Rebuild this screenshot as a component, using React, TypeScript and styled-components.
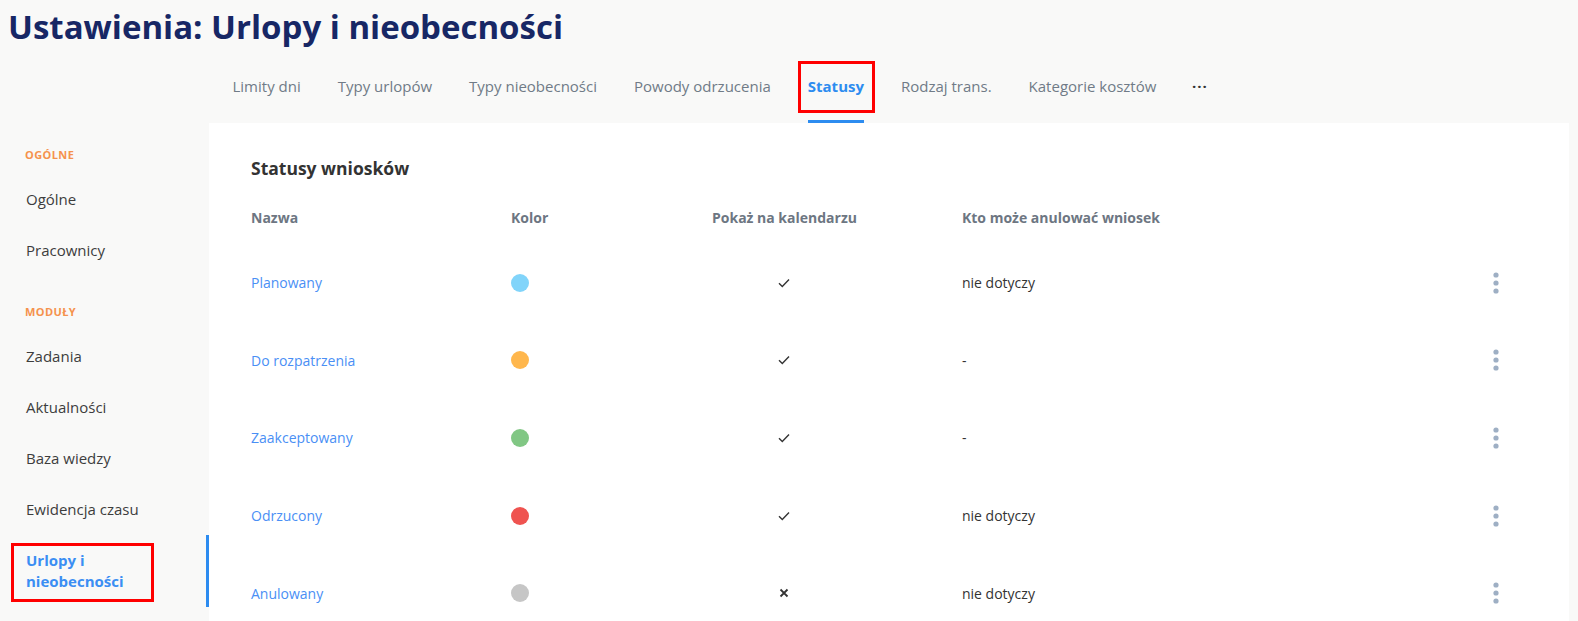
import React from 'react';
import styled, { createGlobalStyle, css } from 'styled-components';

const GlobalStyle = createGlobalStyle`
  html, body {
    margin: 0;
    padding: 0;
    background: #f9f9f8;
    font-family: "Open Sans", "Noto Sans", sans-serif;
    overflow: hidden;
  }
`;

// red annotation frame drawn over a marked element
const marked = css`
  position: relative;
  &::after {
    content: '';
    position: absolute;
    border: 3px solid #f00;
    pointer-events: none;
  }
`;

const Page = styled.div`
  display: flex;
  flex-direction: column;
  min-height: 100vh;
`;

const Title = styled.h1`
  margin: 0;
  padding: 2px 0 0 8px;
  height: 50px;
  line-height: 50px;
  font-size: 33px;
  font-weight: 700;
  color: #172765;
`;

const Body = styled.div`
  display: grid;
  grid-template-columns: 209px 1fr;
  grid-template-rows: 71px 1fr;
  grid-template-areas:
    '. tabs'
    'side main';
  padding-right: 9px;
  flex: 1;
`;

const TabBar = styled.nav`
  grid-area: tabs;
  display: flex;
  align-items: stretch;
  padding-left: 5px;
`;

const Tab = styled.div<{ $active?: boolean; $more?: boolean }>`
  display: flex;
  flex-direction: column;
  align-items: center;
  padding: 24px 18.5px 0 ${(p) => (p.$more ? 17 : 18.5)}px;
  font-size: 15px;
  line-height: 20px;
  color: ${(p) => (p.$active ? '#2d8cf0' : '#707b87')};
  font-weight: ${(p) => (p.$active ? 700 : 400)};
  &::after {
    content: '';
    margin-top: auto;
    align-self: stretch;
    height: 3px;
    background: ${(p) => (p.$active ? '#2d8cf0' : 'transparent')};
  }
`;

const TabLabel = styled.span<{ $marked?: boolean }>`
  ${(p) =>
    p.$marked &&
    css`
      ${marked}
      &::after {
        left: -10px;
        right: -11px;
        top: -15px;
        bottom: -17px;
      }
    `}
`;

const Dots = styled.span`
  font-weight: 700;
  color: #333;
  letter-spacing: 1px;
`;

const Sidebar = styled.aside`
  grid-area: side;
  display: flex;
  flex-direction: column;
  padding-top: 24px;
`;

const SectionLabel = styled.div<{ $first?: boolean }>`
  padding-left: 25px;
  margin-top: ${(p) => (p.$first ? 0 : 28.5)}px;
  margin-bottom: 10.5px;
  font-size: 11px;
  line-height: 16px;
  font-weight: 700;
  letter-spacing: 0.4px;
  color: #f5924d;
  text-transform: uppercase;
`;

const NavItem = styled.div<{ $active?: boolean }>`
  padding: 15px 40px 15px 26px;
  font-size: 15px;
  line-height: 21px;
  color: ${(p) => (p.$active ? '#3b8ef3' : '#3d3d3d')};
  font-weight: ${(p) => (p.$active ? 700 : 400)};
  border-right: 3px solid ${(p) => (p.$active ? '#2d8cf0' : 'transparent')};
  ${(p) =>
    p.$active &&
    css`
      ${marked}
      &::after {
        left: 11px;
        top: 8px;
        width: 137px;
        height: 53px;
      }
    `}
`;

const Card = styled.main`
  grid-area: main;
  background: #fff;
  padding: 33px 40px 0 42px;
`;

const Heading = styled.h2`
  margin: 0 0 10px;
  font-size: 17.5px;
  line-height: 24px;
  font-weight: 700;
  color: #333;
`;

const Row = styled.div<{ $head?: boolean }>`
  display: grid;
  grid-template-columns: 260px 201px 250px 1fr 66px;
  align-items: center;
  height: ${(p) => (p.$head ? 54 : 77.6)}px;
  font-size: 14px;
  color: ${(p) => (p.$head ? '#6d7682' : '#333')};
  font-weight: ${(p) => (p.$head ? 700 : 400)};
`;

const CenterCell = styled.div`
  width: 143px;
  display: flex;
  justify-content: center;
`;

const NameLink = styled.a`
  color: #4a8ff5;
  text-decoration: none;
`;

const Dot = styled.span<{ $color: string }>`
  display: block;
  width: 18px;
  height: 18px;
  border-radius: 50%;
  background: ${(p) => p.$color};
`;

const MenuButton = styled.button`
  justify-self: center;
  display: flex;
  background: none;
  border: 0;
  padding: 0;
  cursor: pointer;
`;

const Check = () => (
  <svg width="12" height="10" viewBox="0 0 12 10">
    <path d="M1 5.2 L4.3 8.5 L11 1.5" fill="none" stroke="#333" strokeWidth="1.4" />
  </svg>
);

const Cross = () => (
  <svg width="10" height="10" viewBox="0 0 10 10">
    <path d="M1.5 1.5 L8.5 8.5 M8.5 1.5 L1.5 8.5" fill="none" stroke="#333" strokeWidth="1.8" />
  </svg>
);

const Kebab = () => (
  <svg width="6" height="22" viewBox="0 0 6 22">
    <circle cx="3" cy="3" r="2.6" fill="#9eafc4" />
    <circle cx="3" cy="11" r="2.6" fill="#9eafc4" />
    <circle cx="3" cy="19" r="2.6" fill="#9eafc4" />
  </svg>
);

const tabs = ['Limity dni', 'Typy urlopów', 'Typy nieobecności', 'Powody odrzucenia', 'Statusy', 'Rodzaj trans.', 'Kategorie kosztów'];

const statuses = [
  { name: 'Planowany', color: '#81d4fa', calendar: true, cancel: 'nie dotyczy' },
  { name: 'Do rozpatrzenia', color: '#ffb74d', calendar: true, cancel: '-' },
  { name: 'Zaakceptowany', color: '#81c784', calendar: true, cancel: '-' },
  { name: 'Odrzucony', color: '#ef5350', calendar: true, cancel: 'nie dotyczy' },
  { name: 'Anulowany', color: '#c6c6c6', calendar: false, cancel: 'nie dotyczy' },
];

export default function App() {
  return (
    <Page>
      <GlobalStyle />
      <Title>Ustawienia: Urlopy i nieobecności</Title>
      <Body>
        <TabBar>
          {tabs.map((t) => (
            <Tab key={t} $active={t === 'Statusy'}>
              <TabLabel $marked={t === 'Statusy'}>{t}</TabLabel>
            </Tab>
          ))}
          <Tab $more>
            <Dots>···</Dots>
          </Tab>
        </TabBar>

        <Sidebar>
          <SectionLabel $first>Ogólne</SectionLabel>
          <NavItem>Ogólne</NavItem>
          <NavItem>Pracownicy</NavItem>
          <SectionLabel>Moduły</SectionLabel>
          <NavItem>Zadania</NavItem>
          <NavItem>Aktualności</NavItem>
          <NavItem>Baza wiedzy</NavItem>
          <NavItem>Ewidencja czasu</NavItem>
          <NavItem $active>Urlopy i nieobecności</NavItem>
        </Sidebar>

        <Card>
          <Heading>Statusy wniosków</Heading>
          <Row $head>
            <div>Nazwa</div>
            <div>Kolor</div>
            <div>Pokaż na kalendarzu</div>
            <div>Kto może anulować wniosek</div>
            <div />
          </Row>
          {statuses.map((s) => (
            <Row key={s.name}>
              <div>
                <NameLink href="#">{s.name}</NameLink>
              </div>
              <div>
                <Dot $color={s.color} />
              </div>
              <CenterCell>{s.calendar ? <Check /> : <Cross />}</CenterCell>
              <div>{s.cancel}</div>
              <MenuButton aria-label="Więcej">
                <Kebab />
              </MenuButton>
            </Row>
          ))}
        </Card>
      </Body>
    </Page>
  );
}
